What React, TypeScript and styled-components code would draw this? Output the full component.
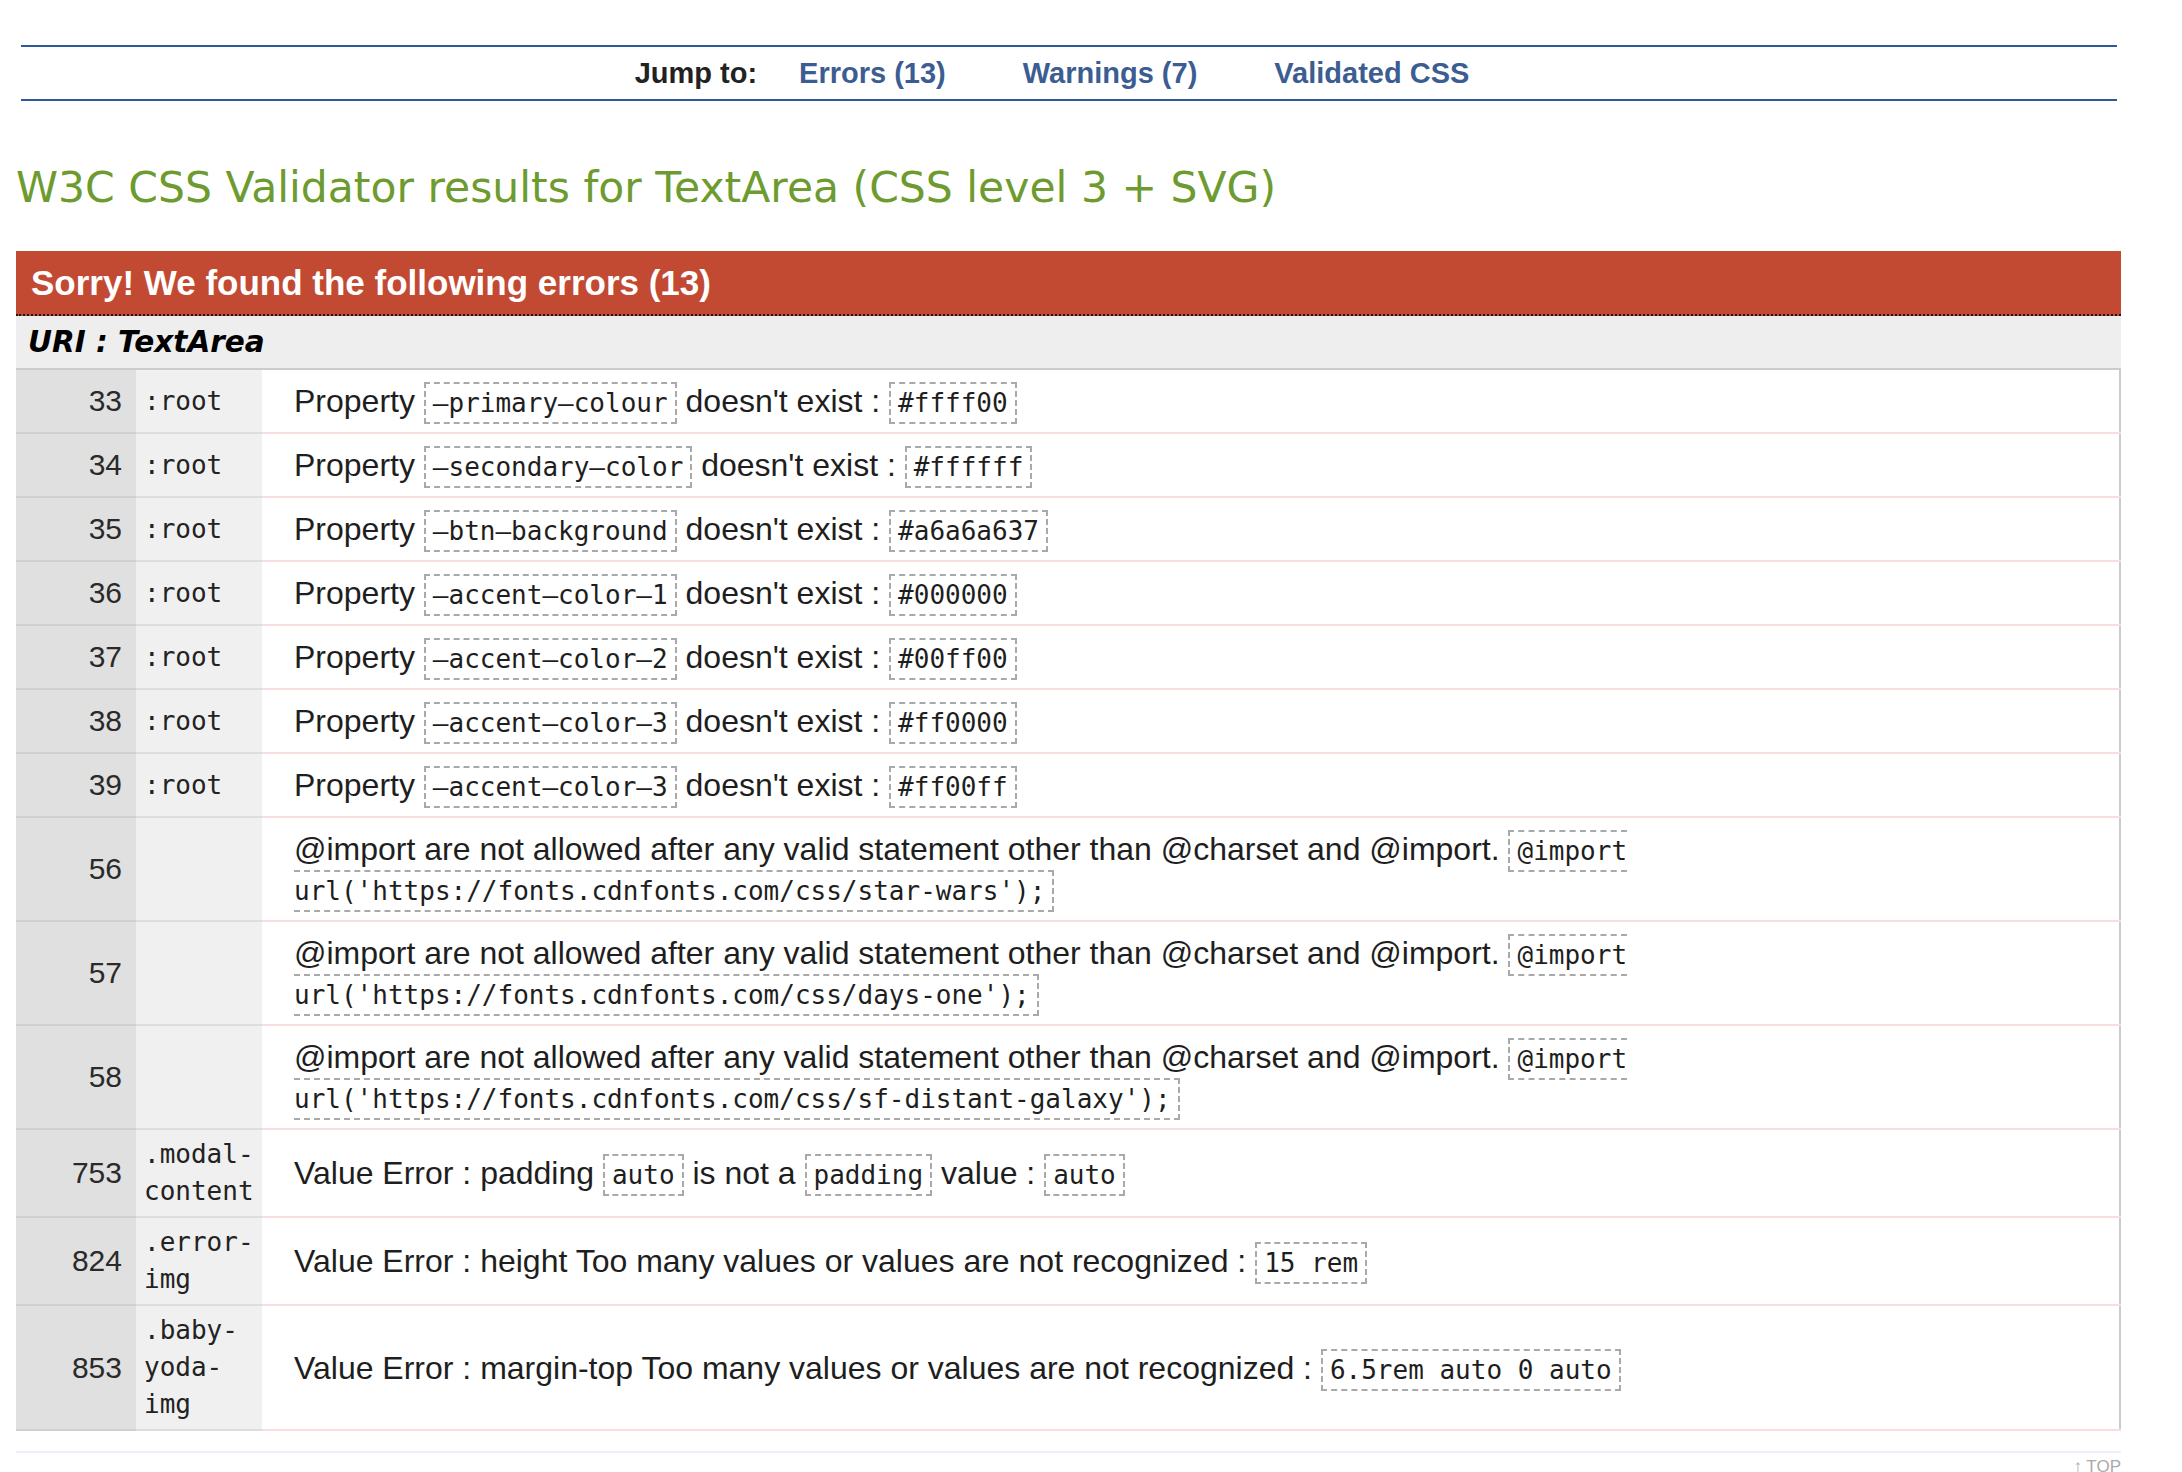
import React from "react";
import styled, { createGlobalStyle } from "styled-components";

const GlobalStyle = createGlobalStyle`
  html, body { margin: 0; padding: 0; background: #ffffff; }
  body { font-family: "Liberation Sans", Arial, Helvetica, sans-serif; color: #222; }
`;

const Page = styled.div`
  padding: 45px 61px 0 16px;
`;

const Nav = styled.nav`
  margin: 0 4px 0 5px;
  border-top: 2px solid #2e5b95;
  border-bottom: 2px solid #2e5b95;
  height: 52px;
  display: flex;
  align-items: center;
  justify-content: center;
  gap: 77px;
  padding-right: 34px;
  font-weight: bold;
  font-size: 29px;
`;

const NavLabel = styled.span`
  color: #222;
  margin-right: -35px;
`;

const NavLink = styled.a`
  color: #3c5d92;
  text-decoration: none;
`;

const Title = styled.h2`
  margin: 61px 0 37px 0;
  font-family: "DejaVu Sans", Verdana, sans-serif;
  font-weight: normal;
  font-size: 42.5px;
  line-height: 52px;
  color: #6d9b2f;
`;

const Banner = styled.h3`
  margin: 0;
  height: 63px;
  display: flex;
  align-items: center;
  padding-left: 15px;
  background: #c24a33;
  color: #ffffff;
  font-size: 35px;
  font-weight: bold;
  border-bottom: 2px dotted #1a1a1a;
`;

const UriRow = styled.div`
  height: 52px;
  display: flex;
  align-items: center;
  padding-left: 12px;
  background: #eeeeee;
  border-bottom: 2px solid #cccccc;
  font-family: "DejaVu Sans", Verdana, sans-serif;
  font-weight: bold;
  font-style: italic;
  font-size: 29.5px;
  color: #000;
`;

const Table = styled.table`
  width: 100%;
  border-collapse: collapse;
  table-layout: fixed;
  border-right: 2px solid #cccccc;
`;

const NumCell = styled.td`
  width: 120px;
  box-sizing: border-box;
  background: #e0e0e0;
  border-bottom: 2px solid #cfcfcf;
  text-align: right;
  padding: 0 14px 0 0;
  vertical-align: middle;
  font-size: 30px;
  color: #2a2a2a;
`;

const SelCell = styled.td`
  width: 126px;
  box-sizing: border-box;
  background: #f0f0f0;
  border-bottom: 2px solid #dddddd;
  padding: 6px 4px 6px 8px;
  vertical-align: middle;
  font-family: "DejaVu Sans Mono", Menlo, monospace;
  font-size: 26px;
  line-height: 37px;
  color: #222;
`;

const MsgCell = styled.td`
  background: #ffffff;
  border-bottom: 2px solid #f7dfdf;
  padding: 11px 10px 11px 32px;
  vertical-align: middle;
  font-size: 32px;
  line-height: 40px;
  color: #1e1e1e;
`;

const Code = styled.span`
  font-family: "DejaVu Sans Mono", Menlo, monospace;
  font-size: 26px;
  line-height: 1;
  border: 2px dashed #a9a9a9;
  padding: 4px 7px;
  box-decoration-break: slice;
`;

const Footer = styled.div`
  margin-top: 20px;
  border-top: 2px solid #eeeeff;
  text-align: right;
  padding-top: 4px;
  font-size: 17px;
  color: #aaaaaa;
`;

type Part = string | { code: string };

interface ErrorRow {
  line: number;
  selector: string;
  parts: Part[];
}

const prop = (name: string, value: string): Part[] => [
  "Property ",
  { code: name },
  " doesn't exist : ",
  { code: value },
];

const imp = (url: string): Part[] => [
  "@import are not allowed after any valid statement other than @charset and @import. ",
  { code: `@import url('${url}');` },
];

const rows: ErrorRow[] = [
  { line: 33, selector: ":root", parts: prop("\u2013primary\u2013colour", "#ffff00") },
  { line: 34, selector: ":root", parts: prop("\u2013secondary\u2013color", "#ffffff") },
  { line: 35, selector: ":root", parts: prop("\u2013btn\u2013background", "#a6a6a637") },
  { line: 36, selector: ":root", parts: prop("\u2013accent\u2013color\u20131", "#000000") },
  { line: 37, selector: ":root", parts: prop("\u2013accent\u2013color\u20132", "#00ff00") },
  { line: 38, selector: ":root", parts: prop("\u2013accent\u2013color\u20133", "#ff0000") },
  { line: 39, selector: ":root", parts: prop("\u2013accent\u2013color\u20133", "#ff00ff") },
  { line: 56, selector: "", parts: imp("https://fonts.cdnfonts.com/css/star-wars") },
  { line: 57, selector: "", parts: imp("https://fonts.cdnfonts.com/css/days-one") },
  { line: 58, selector: "", parts: imp("https://fonts.cdnfonts.com/css/sf-distant-galaxy") },
  {
    line: 753,
    selector: ".modal-content",
    parts: ["Value Error : padding ", { code: "auto" }, " is not a ", { code: "padding" }, " value : ", { code: "auto" }],
  },
  {
    line: 824,
    selector: ".error-img",
    parts: ["Value Error : height Too many values or values are not recognized : ", { code: "15 rem" }],
  },
  {
    line: 853,
    selector: ".baby-yoda-img",
    parts: ["Value Error : margin-top Too many values or values are not recognized : ", { code: "6.5rem auto 0 auto" }],
  },
];

export default function App() {
  return (
    <>
      <GlobalStyle />
      <Page>
        <Nav>
          <NavLabel>Jump to:</NavLabel>
          <NavLink href="#errors">Errors (13)</NavLink>
          <NavLink href="#warnings">Warnings (7)</NavLink>
          <NavLink href="#css">Validated CSS</NavLink>
        </Nav>
        <Title>W3C CSS Validator results for TextArea (CSS level 3 + SVG)</Title>
        <Banner>Sorry! We found the following errors (13)</Banner>
        <UriRow>URI : TextArea</UriRow>
        <Table>
          <tbody>
            {rows.map((r) => (
              <tr key={r.line}>
                <NumCell>{r.line}</NumCell>
                <SelCell>{r.selector}</SelCell>
                <MsgCell>
                  {r.parts.map((p, i) =>
                    typeof p === "string" ? (
                      <React.Fragment key={i}>{p}</React.Fragment>
                    ) : (
                      <Code key={i}>{p.code}</Code>
                    )
                  )}
                </MsgCell>
              </tr>
            ))}
          </tbody>
        </Table>
        <Footer>↑ TOP</Footer>
      </Page>
    </>
  );
}
